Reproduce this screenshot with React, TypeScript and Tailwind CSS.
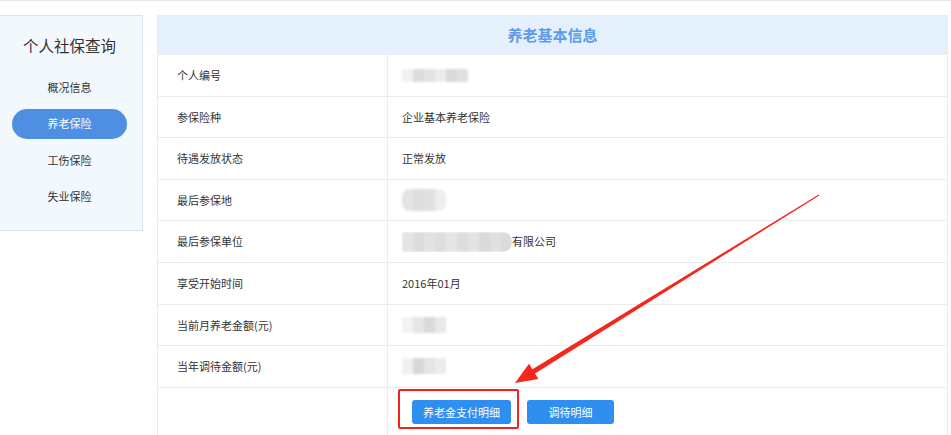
import React from "react";

const font = { fontFamily: '"Noto Sans CJK SC", "Noto Sans", sans-serif' };

function Mosaic({ shades, h = 13, round = false }: { shades: string[]; h?: number; round?: boolean }) {
  return (
    <div className={`flex blur-[1px] ${round ? "rounded-[8px] overflow-hidden" : ""}`}>
      {shades.map((c, i) => (
        <div key={i} style={{ backgroundColor: c, height: h }} className="w-[11px]" />
      ))}
    </div>
  );
}

const rows: { label: string; value: React.ReactNode }[] = [
  { label: "个人编号", value: <Mosaic shades={["#f1f1f1", "#dcdcdc", "#e3e3e3", "#ececec", "#dadada", "#e0e0e0"]} /> },
  { label: "参保险种", value: "企业基本养老保险" },
  { label: "待遇发放状态", value: "正常发放" },
  { label: "最后参保地", value: <Mosaic round h={22} shades={["#e3e3e3", "#dedede", "#e0e0e0", "#eeeeee"]} /> },
  {
    label: "最后参保单位",
    value: (
      <div className="flex items-center">
        <div className="rounded-r-[9px] overflow-hidden">
          <Mosaic h={20} shades={["#e4e4e4", "#dcdcdc", "#e2e2e2", "#dedede", "#e6e6e6", "#dddddd", "#e3e3e3", "#d9d9d9", "#e0e0e0", "#dbdbdb"]} />
        </div>
        <span>有限公司</span>
      </div>
    ),
  },
  { label: "享受开始时间", value: "2016年01月" },
  { label: "当前月养老金额(元)", value: <Mosaic h={16} shades={["#f3f3f3", "#e6e6e6", "#dadada", "#e8e8e8"]} /> },
  { label: "当年调待金额(元)", value: <Mosaic h={16} shades={["#f0f0f0", "#d8d8d8", "#e5e5e5", "#ececec"]} /> },
];

export default function App() {
  return (
    <div style={font} className="relative w-[951px] h-[435px] overflow-hidden bg-white border-t border-[#e6e6e6]">
      <div className="flex items-start pt-[14px]">
        {/* Sidebar */}
        <div className="w-[143px] shrink-0 bg-[#f3f8fd] border border-l-0 border-[#d5e4f2] pt-[17px] pb-[18px] pr-[3px] flex flex-col items-center">
          <div className="text-[15.5px] leading-[24px] text-[#333]">个人社保查询</div>
          <div className="mt-[15px] flex flex-col gap-[6.5px] w-full items-center">
            <div className="h-[30px] flex items-center text-[11px] text-[#333]">概况信息</div>
            <div className="h-[30px] w-[115px] rounded-full bg-[#4e8fe2] flex items-center justify-center text-[11px] text-white">养老保险</div>
            <div className="h-[30px] flex items-center text-[11px] text-[#333]">工伤保险</div>
            <div className="h-[30px] flex items-center text-[11px] text-[#333]">失业保险</div>
          </div>
        </div>

        {/* Main */}
        <div className="ml-[14px] w-[791px] border border-[#ececec] border-b-0">
          <div className="h-[38px] bg-[#e4f1fc] flex items-center justify-center text-[15px] font-bold text-[#5b9be9]">养老基本信息</div>
          {rows.map((r) => (
            <div key={r.label} className="h-[41.6px] flex border-t border-[#ececec] text-[11px] text-[#333]">
              <div className="w-[230px] border-r border-[#ececec] flex items-center pl-[19px]">{r.label}</div>
              <div className="flex-1 flex items-center pl-[14px]">{r.value}</div>
            </div>
          ))}
          <div className="h-[60px] flex border-t border-[#ececec]">
            <div className="w-[230px] border-r border-[#ececec]" />
            <div className="flex-1 flex items-start pt-[12px] pl-[24px] gap-[16px]">
              <button className="h-[24px] w-[99px] rounded-[3px] bg-[#2f8ff0] text-white text-[11px]">养老金支付明细</button>
              <button className="h-[24px] w-[87px] rounded-[3px] bg-[#2f8ff0] text-white text-[11px]">调待明细</button>
            </div>
          </div>
        </div>
      </div>

      {/* Annotation box */}
      <div className="absolute left-[398px] top-[388px] w-[121px] h-[40px] border-2 border-[#f2231b] rounded-[2px]" />

      {/* Annotation arrow */}
      <svg className="absolute left-0 top-0" width="951" height="435" viewBox="0 0 951 435">
        <polygon
          fill="#f7261c"
          points="515,382 529,362.7 532.4,368.3 818.7,193.6 819.3,194.4 535,372.5 538.4,378.1"
        />
      </svg>
    </div>
  );
}
